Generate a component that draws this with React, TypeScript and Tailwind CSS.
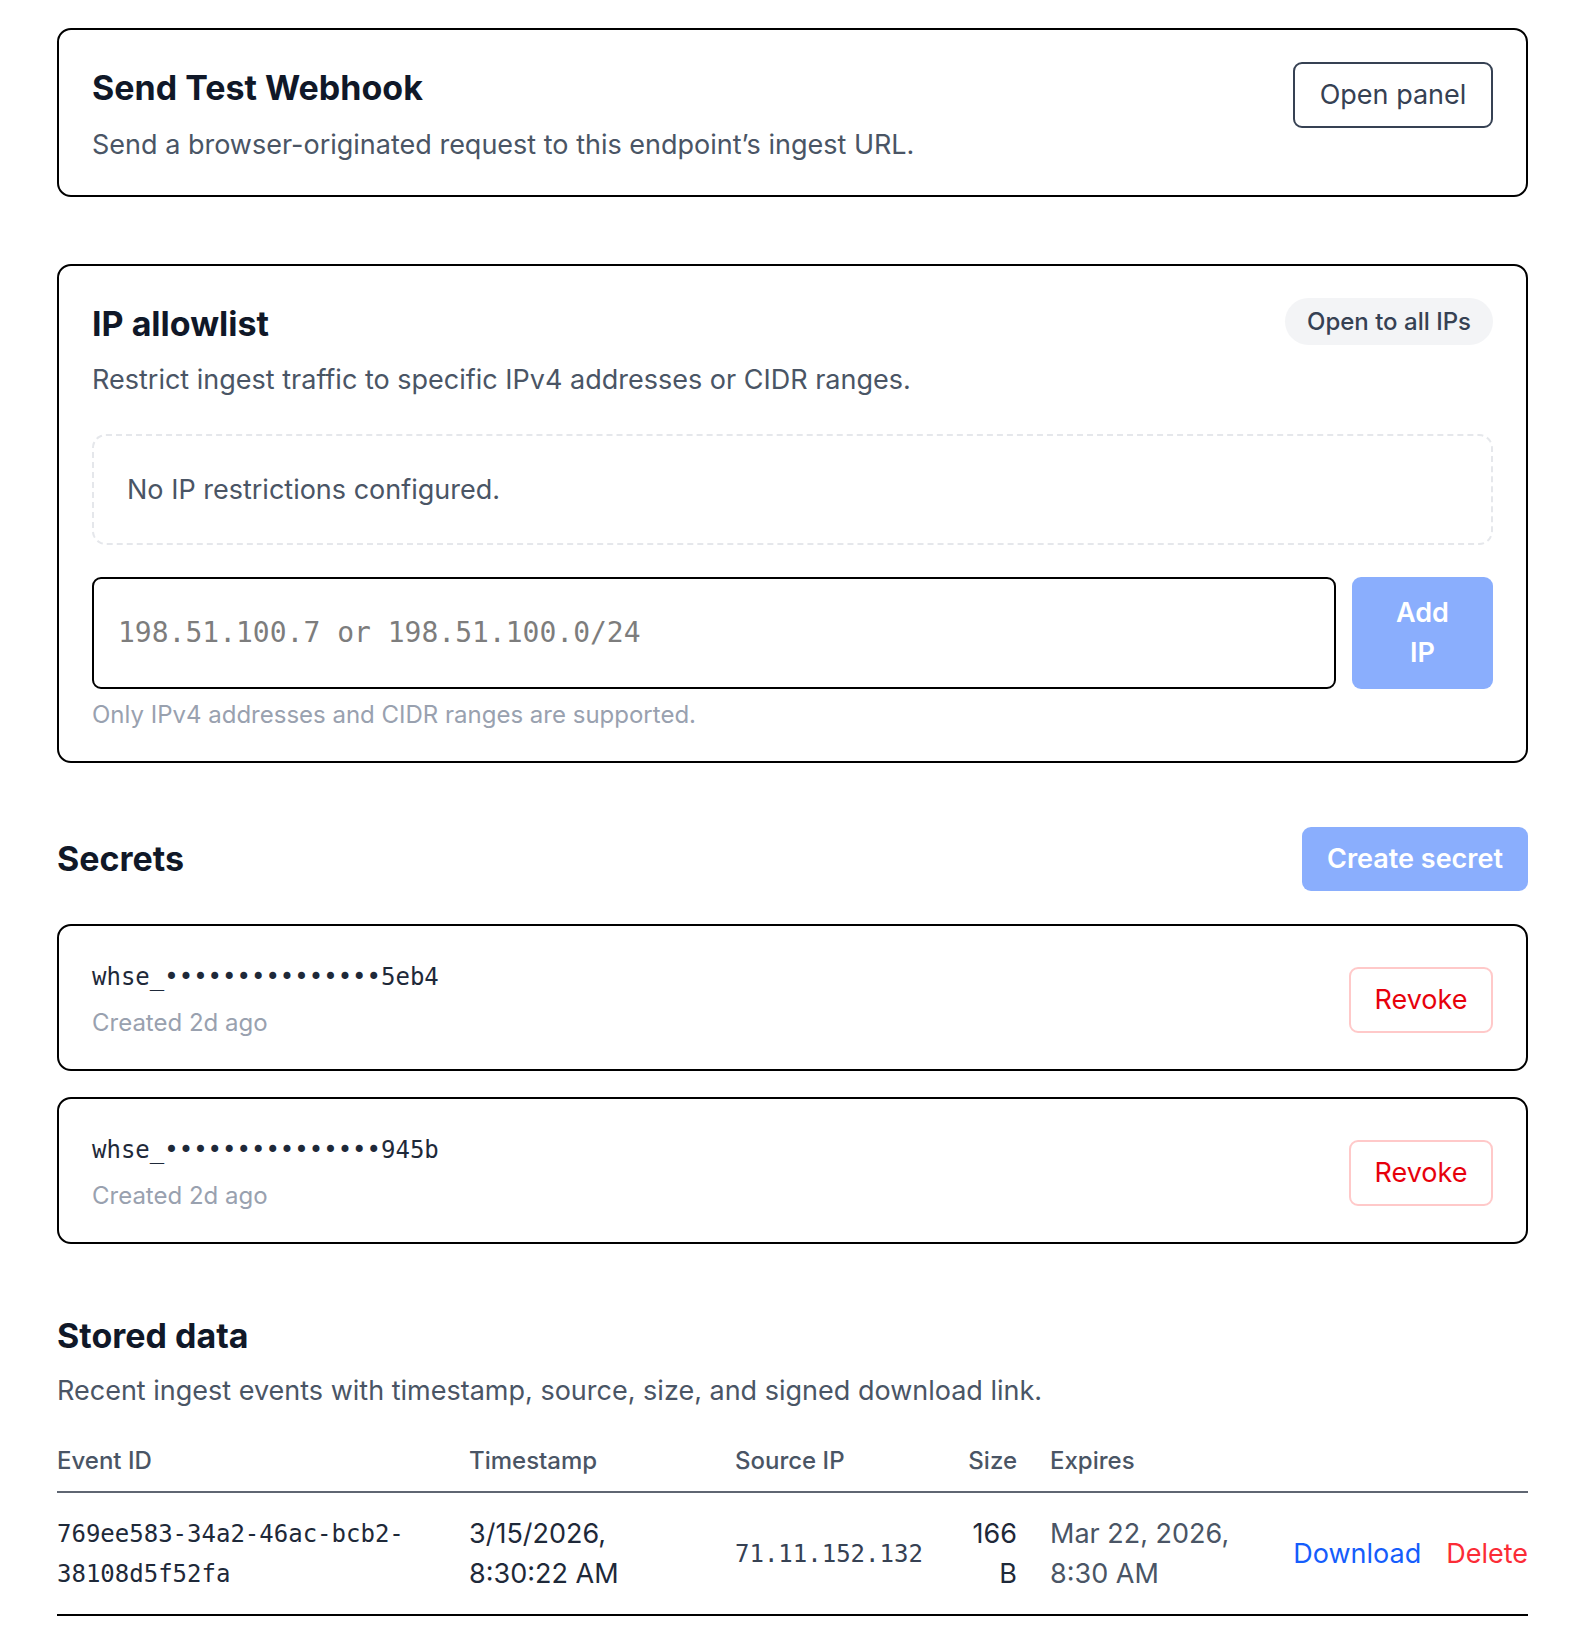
const mono = "font-['DejaVu_Sans_Mono','Liberation_Mono',monospace]";

const secrets = [
  { id: "s1", masked: "whse_•••••••••••••••5eb4", created: "Created 2d ago" },
  { id: "s2", masked: "whse_•••••••••••••••945b", created: "Created 2d ago" },
];

const events = [
  {
    id: "769ee583-34a2-46ac-bcb2-38108d5f52fa",
    timestamp: "3/15/2026, 8:30:22 AM",
    ip: "71.11.152.132",
    size: "166 B",
    expires: "Mar 22, 2026, 8:30 AM",
  },
];

function SendTestCard() {
  return (
    <section className="flex items-start justify-between rounded-[14px] border-2 border-black px-[33px] pt-[34px] pb-[30px]">
      <div>
        <h2 className="text-[34px] leading-[48px] font-bold text-gray-900">Send Test Webhook</h2>
        <p className="mt-[13px] text-[27px] leading-[40px] text-gray-600">
          Send a browser-originated request to this endpoint’s ingest URL.
        </p>
      </div>
      <button className="-mt-[2px] h-[66px] w-[200px] rounded-[9px] border-2 border-gray-700 text-[27px] text-gray-700">
        Open panel
      </button>
    </section>
  );
}

function AllowlistCard() {
  return (
    <section className="mt-[67px] rounded-[14px] border-2 border-black px-[33px] pt-[34px] pb-[28px]">
      <div className="flex items-start justify-between">
        <h2 className="text-[34px] leading-[48px] font-bold text-gray-900">IP allowlist</h2>
        <span className="-mt-[2px] rounded-full bg-gray-100 px-[22px] py-[8px] text-[24px] leading-[31px] font-medium text-gray-700">
          Open to all IPs
        </span>
      </div>
      <p className="mt-[12px] text-[27px] leading-[40px] text-gray-600">
        Restrict ingest traffic to specific IPv4 addresses or CIDR ranges.
      </p>
      <div className="mt-[34px] rounded-[14px] border-2 border-dashed border-gray-200 px-[33px] py-[33px] text-[27px] leading-[41px] text-gray-600">
        No IP restrictions configured.
      </div>
      <div className="mt-[32px] flex gap-[16px]">
        <input
          placeholder="198.51.100.7 or 198.51.100.0/24"
          className={`${mono} min-w-0 flex-1 rounded-[9px] border-2 border-black px-[24px] text-[28px] text-gray-900 placeholder:text-[#7d7d7d] outline-none`}
        />
        <button className="w-[141px] rounded-[9px] bg-blue-600/50 px-[36px] py-[16px] text-[27px] leading-[40px] font-semibold text-white">
          Add IP
        </button>
      </div>
      <p className="mt-[8px] text-[24px] leading-[36px] text-gray-400">
        Only IPv4 addresses and CIDR ranges are supported.
      </p>
    </section>
  );
}

function SecretsSection() {
  return (
    <section className="mt-[64px]">
      <div className="flex items-center justify-between">
        <h2 className="text-[34px] leading-[48px] font-bold text-gray-900">Secrets</h2>
        <button className="h-[64px] w-[226px] rounded-[9px] bg-blue-600/50 text-[27px] font-semibold text-white">
          Create secret
        </button>
      </div>
      <div className="mt-[33px] flex flex-col gap-[26px]">
        {secrets.map((s) => (
          <div
            key={s.id}
            className="flex items-center justify-between rounded-[14px] border-2 border-black px-[33px] pt-[33px] pb-[28px]"
          >
            <div>
              <div className={`${mono} text-[24px] leading-[36px] text-gray-800`}>{s.masked}</div>
              <div className="mt-[10px] text-[24px] leading-[36px] text-gray-400">{s.created}</div>
            </div>
            <button className="h-[66px] w-[144px] rounded-[9px] border-2 border-red-200 text-[27px] text-red-600">
              Revoke
            </button>
          </div>
        ))}
      </div>
    </section>
  );
}

function StoredData() {
  const cols = "grid grid-cols-[379px_233px_199px_50px_1fr_auto] gap-x-[33px]";
  return (
    <section className="mt-[68px]">
      <h2 className="text-[34px] leading-[48px] font-bold text-gray-900">Stored data</h2>
      <p className="mt-[11px] text-[27px] leading-[40px] text-gray-600">
        Recent ingest events with timestamp, source, size, and signed download link.
      </p>
      <div className={`${cols} mt-[32px] border-b-2 border-[#5f6672] pb-[12px] text-[24px] leading-[36px] font-medium text-gray-600`}>
        <div>Event ID</div>
        <div>Timestamp</div>
        <div>Source IP</div>
        <div className="text-right">Size</div>
        <div>Expires</div>
        <div />
      </div>
      {events.map((e) => (
        <div key={e.id} className={`${cols} items-center border-b-2 border-black pt-[21px] pb-[20px] text-[27px] leading-[40px]`}>
          <div className={`${mono} text-[24px] break-words text-gray-800`}>{e.id}</div>
          <div className="text-gray-800">{e.timestamp}</div>
          <div className={`${mono} text-[24px] text-gray-700`}>{e.ip}</div>
          <div className="text-right text-gray-800">{e.size}</div>
          <div className="text-gray-600">{e.expires}</div>
          <div className="flex gap-[25px]">
            <a className="text-blue-600">Download</a>
            <a className="text-red-500">Delete</a>
          </div>
        </div>
      ))}
    </section>
  );
}

export default function App() {
  return (
    <div className="min-h-screen bg-white pt-[28px] pb-[16px] pl-[57px] pr-[50px] font-['Inter','Noto_Sans',sans-serif] text-black">
      <SendTestCard />
      <AllowlistCard />
      <SecretsSection />
      <StoredData />
    </div>
  );
}
